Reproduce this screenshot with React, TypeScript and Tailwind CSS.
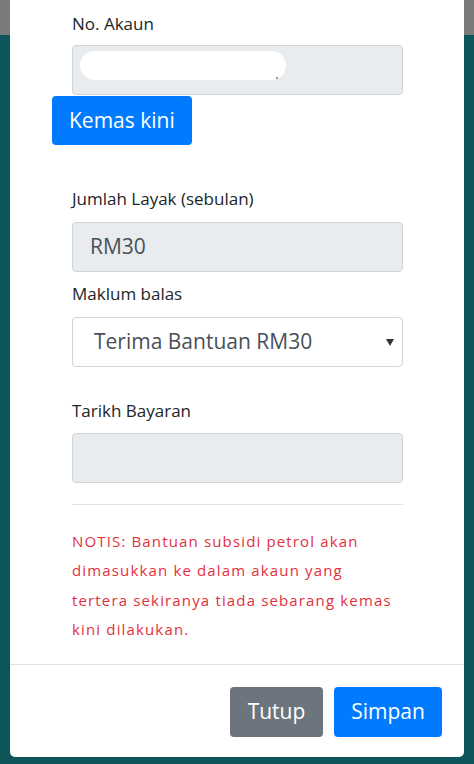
export default function App() {
  return (
    <div className="relative h-[764px] w-[474px] overflow-hidden bg-[#0e5559] font-['Open_Sans',sans-serif]">
      <div className="h-[35px] bg-[#7b7b7b]" />

      <div className="absolute left-[10px] right-[10px] top-0 bottom-[7px] flex flex-col rounded-b-[5px] bg-white">
        <div className="flex-1 pl-[62px] pr-[61px] pt-[11px]">
          <label className="block text-[17px] leading-[25px] text-[#212529]">No. Akaun</label>
          <div className="relative mt-[9px] h-[50px] rounded-[4px] border border-[#ced4da] bg-[#e9ecef]">
            <div className="absolute left-[7px] top-[5px] h-[29px] w-[206px] rounded-full bg-white" />
            <div className="absolute left-[203px] top-[31px] h-[2px] w-[2px] rounded-full bg-[#777]" />
          </div>
          <button className="-ml-[20px] mt-[1px] h-[49px] rounded-[4px] bg-[#007bff] px-[17px] text-[21px] text-white">
            Kemas kini
          </button>

          <label className="mt-[41px] block text-[17px] leading-[25px] text-[#212529]">Jumlah Layak (sebulan)</label>
          <div className="mt-[11px] flex h-[50px] items-center rounded-[4px] border border-[#ced4da] bg-[#e9ecef] px-[17px] text-[21px] text-[#495057]">
            RM30
          </div>

          <label className="mt-[9px] block text-[17px] leading-[25px] text-[#212529]">Maklum balas</label>
          <div className="mt-[11px] flex h-[50px] items-center justify-between rounded-[4px] border border-[#ced4da] bg-white pl-[21px] pr-[8px] text-[21px] text-[#495057]">
            <span>Terima Bantuan RM30</span>
            <svg width="8" height="7" viewBox="0 0 8 7">
              <path d="M0 0h8L4 7z" fill="#333" />
            </svg>
          </div>

          <label className="mt-[31px] block text-[17px] leading-[25px] text-[#212529]">Tarikh Bayaran</label>
          <div className="mt-[10px] h-[50px] rounded-[4px] border border-[#ced4da] bg-[#e9ecef]" />

          <div className="mt-[21px] h-px bg-[#dee2e6]" />

          <p className="mt-[22px] whitespace-nowrap text-[15px] leading-[29.3px] tracking-[1.15px] text-[#e3303e]">
            NOTIS: Bantuan subsidi petrol akan
            <br />
            dimasukkan ke dalam akaun yang
            <br />
            tertera sekiranya tiada sebarang kemas
            <br />
            kini dilakukan.
          </p>
        </div>

        <div className="flex justify-end gap-[11px] border-t border-[#dee2e6] pb-[20px] pr-[22px] pt-[22px]">
          <button className="h-[50px] w-[93px] rounded-[4px] bg-[#6c757d] text-[21px] text-white">Tutup</button>
          <button className="h-[50px] w-[108px] rounded-[4px] bg-[#007bff] text-[21px] text-white">Simpan</button>
        </div>
      </div>
    </div>
  );
}
